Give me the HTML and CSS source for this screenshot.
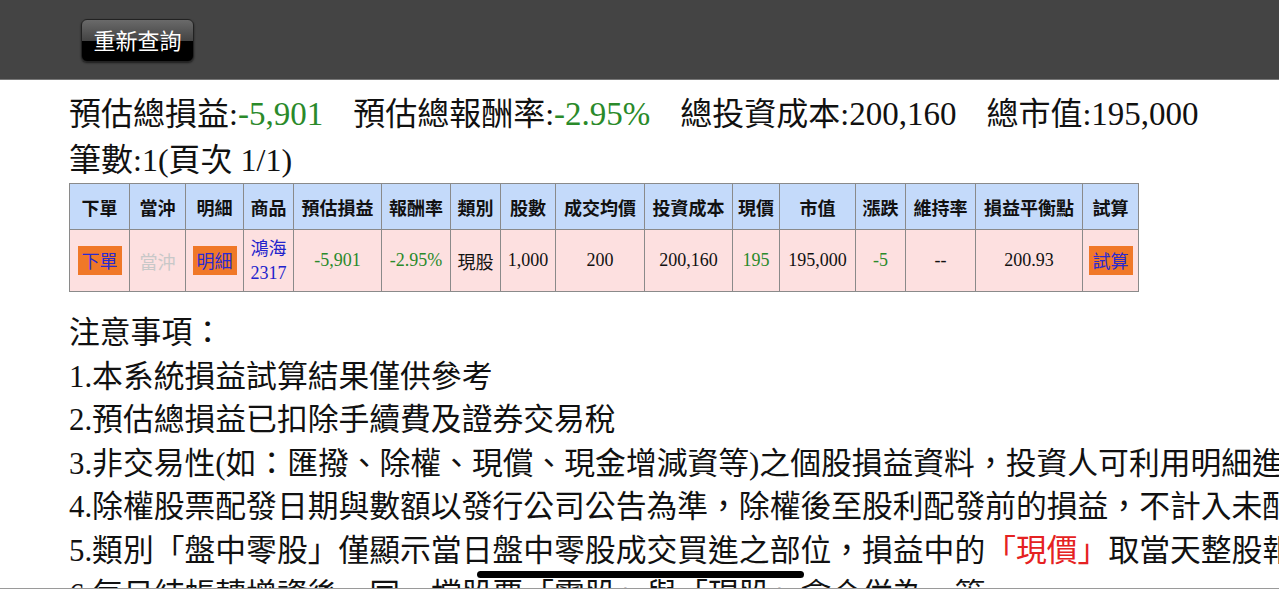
FILE: index.html
```html
<!DOCTYPE html>
<html lang="zh-Hant">
<head>
    <meta charset="UTF-8">
    <meta name="viewport" content="width=device-width, initial-scale=1.0">
    <title>損益試算</title>
    <link rel="stylesheet" href="styles.css">
</head>
<body>
    <div class="topbar">
        <button class="query-btn">重新查詢</button>
    </div>

    <div class="content">
        <div class="summary">
            <div class="summary-line">
                <span class="item">預估總損益:<span class="green num">-5,901</span></span>
                <span class="item">預估總報酬率:<span class="green num">-2.95%</span></span>
                <span class="item">總投資成本:<span class="num">200,160</span></span>
                <span class="item">總市值:<span class="num">195,000</span></span>
            </div>
            <div class="summary-line">筆數:1(頁次 1/1)</div>
        </div>

        <table class="result">
            <colgroup>
                <col style="width:60px"><col style="width:56px"><col style="width:58px"><col style="width:50px">
                <col style="width:88px"><col style="width:69px"><col style="width:50px"><col style="width:55px">
                <col style="width:89px"><col style="width:88px"><col style="width:47px"><col style="width:76px">
                <col style="width:50px"><col style="width:70px"><col style="width:107px"><col style="width:56px">
            </colgroup>
            <tr>
                <th>下單</th><th>當沖</th><th>明細</th><th>商品</th><th>預估損益</th><th>報酬率</th>
                <th>類別</th><th>股數</th><th>成交均價</th><th>投資成本</th><th>現價</th><th>市值</th>
                <th>漲跌</th><th>維持率</th><th>損益平衡點</th><th>試算</th>
            </tr>
            <tr>
                <td><span class="tag">下單</span></td>
                <td class="disabled">當沖</td>
                <td><span class="tag">明細</span></td>
                <td class="stock">鴻海<br>2317</td>
                <td class="green">-5,901</td>
                <td class="green">-2.95%</td>
                <td>現股</td>
                <td>1,000</td>
                <td>200</td>
                <td>200,160</td>
                <td class="green">195</td>
                <td>195,000</td>
                <td class="green">-5</td>
                <td>--</td>
                <td>200.93</td>
                <td><span class="tag">試算</span></td>
            </tr>
        </table>

        <div class="notes">
            <div>注意事項：</div>
            <div>1.本系統損益試算結果僅供參考</div>
            <div>2.預估總損益已扣除手續費及證券交易稅</div>
            <div>3.非交易性(如：匯撥、除權、現償、現金增減資等)之個股損益資料，投資人可利用明細進行調整</div>
            <div>4.除權股票配發日期與數額以發行公司公告為準，除權後至股利配發前的損益，不計入未配發股票之損益</div>
            <div>5.類別「盤中零股」僅顯示當日盤中零股成交買進之部位，損益中的<span class="red">「現價」</span>取當天整股報價計算</div>
            <div>6.每日結帳轉增資後，同一檔股票「零股」與「現股」會合併為一筆</div>
        </div>
    </div>

    <div class="home-indicator"></div>
    <div class="bottom-edge"></div>
</body>
</html>
```

FILE: styles.css
```css
* {
    margin: 0;
    padding: 0;
    box-sizing: border-box;
}

body {
    background: #fff;
    color: #111;
    font-family: 'Liberation Serif', 'Noto Sans CJK TC', serif;
    overflow: hidden;
    height: 100vh;
}

.topbar {
    height: 80px;
    background: #444;
    border-bottom: 1px solid #777;
    padding: 19px 0 0 81px;
}

.query-btn {
    width: 113px;
    height: 43px;
    padding-bottom: 3px;
    border: 1px solid #222;
    border-radius: 6px;
    background: linear-gradient(to bottom, #6a6a6a 0%, #444 50%, #000 50%, #000 100%);
    color: #fff;
    font-family: 'Noto Sans CJK TC', sans-serif;
    font-size: 22px;
    line-height: 1;
    box-shadow: 0 1px 2px rgba(0, 0, 0, 0.6);
}

.content {
    padding: 11px 0 0 69px;
}

.summary-line {
    font-size: 32px;
    line-height: 46px;
    white-space: nowrap;
}

.summary-line .item {
    margin-right: 22px;
}

.summary-line .num {
    font-size: 33px;
}

.green {
    color: #2a8a2a;
}

.red {
    color: #e52222;
}

/* 結果表格 */
.result {
    border-collapse: collapse;
    table-layout: fixed;
    width: 1069px;
    text-align: center;
    font-size: 18px;
}

.result th,
.result td {
    border: 1px solid #8a8a8a;
    padding: 0;
}

.result th {
    background: #c4dafa;
    height: 46px;
    font-family: 'Noto Sans CJK TC', sans-serif;
    font-size: 18px;
    font-weight: bold;
    color: #111;
    white-space: nowrap;
}

.result td {
    background: #fde0e0;
    height: 62px;
}

.result td.disabled {
    color: #c8c8c8;
    font-family: 'Noto Sans CJK TC', sans-serif;
}

.result td.stock {
    color: #2222cc;
    font-size: 18px;
    line-height: 24px;
}

.tag {
    display: inline-block;
    background: #f07828;
    color: #2a2ad0;
    font-family: 'Noto Sans CJK TC', sans-serif;
    font-size: 18px;
    line-height: 29px;
    padding: 0 4px;
}

.notes {
    margin-top: 20px;
    font-size: 30.8px;
    line-height: 43.6px;
    white-space: nowrap;
}

.home-indicator {
    position: fixed;
    left: 477px;
    top: 571px;
    width: 327px;
    height: 7px;
    border-radius: 4px;
    background: #000;
}

.bottom-edge {
    position: fixed;
    left: 0;
    right: 0;
    top: 588px;
    height: 3px;
    background: #fff;
    border-top: 1px solid #9a9a9a;
}
```
